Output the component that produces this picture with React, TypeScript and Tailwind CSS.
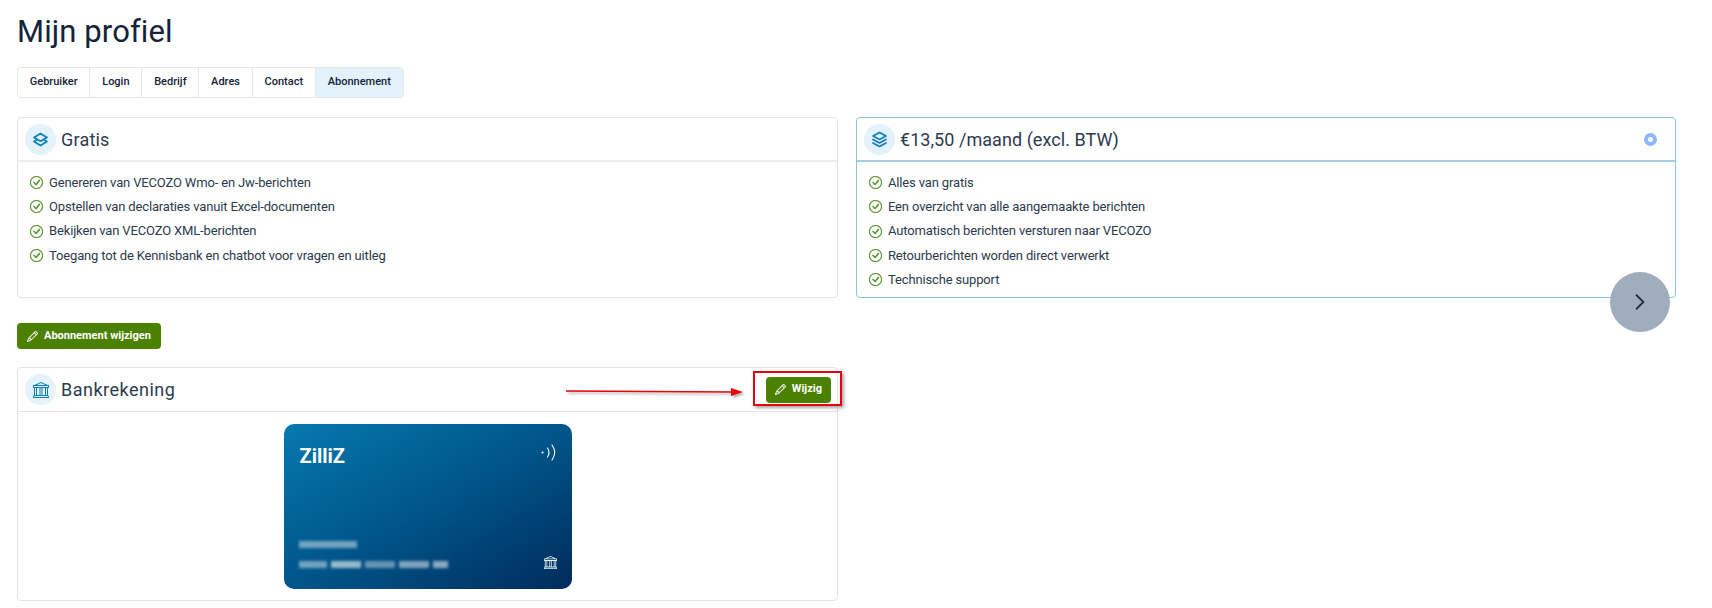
import type { ReactNode } from "react";
import { BsBank, BsCheckCircle, BsChevronRight, BsPencil } from "react-icons/bs";

const TABS = ["Gebruiker", "Login", "Bedrijf", "Adres", "Contact", "Abonnement"];

const FREE_FEATURES = [
  "Genereren van VECOZO Wmo- en Jw-berichten",
  "Opstellen van declaraties vanuit Excel-documenten",
  "Bekijken van VECOZO XML-berichten",
  "Toegang tot de Kennisbank en chatbot voor vragen en uitleg",
];

const PAID_FEATURES = [
  "Alles van gratis",
  "Een overzicht van alle aangemaakte berichten",
  "Automatisch berichten versturen naar VECOZO",
  "Retourberichten worden direct verwerkt",
  "Technische support",
];

// blurred account details on the card: [width, opacity]
const BLUR_ROW: [number, number][] = [
  [28, 0.45],
  [30, 0.6],
  [30, 0.4],
  [30, 0.5],
  [15, 0.55],
];

function IconBubble({ children }: { children: ReactNode }) {
  return (
    <span className="flex h-[31px] w-[31px] shrink-0 items-center justify-center rounded-full bg-[#e3f2fb] text-[#0f7fb5]">
      {children}
    </span>
  );
}

function StackIcon({ layers }: { layers: 2 | 3 }) {
  return (
    <svg width="17" height="17" viewBox="0 0 17 17" fill="none" stroke="currentColor" strokeWidth="1.7" strokeLinejoin="round" strokeLinecap="round">
      {layers === 2 ? (
        <>
          <path d="M8.5 2.5 15 6.5 8.5 10.2 2 6.5Z" />
          <path d="M4.6 9 2 10.5 8.5 14.5 15 10.5 12.4 9" />
        </>
      ) : (
        <>
          <path d="M8.5 1.5 15 5 8.5 8.5 2 5Z" />
          <path d="M2 8.5 8.5 12 15 8.5" />
          <path d="M2 12 8.5 15.5 15 12" />
        </>
      )}
    </svg>
  );
}

function FeatureList({ items }: { items: string[] }) {
  return (
    <ul className="flex flex-col gap-[5.3px] px-[12px] pt-[11px]">
      {items.map((item) => (
        <li key={item} className="flex h-[19px] items-center gap-[6px] text-[13px] tracking-[-0.15px] text-[#2c3b4e]">
          <BsCheckCircle size={13} strokeWidth={0.4} className="shrink-0 text-[#4c8a1c]" />
          {item}
        </li>
      ))}
    </ul>
  );
}

function GreenButton({ label, className }: { label: string; className: string }) {
  return (
    <button
      type="button"
      className={`flex h-[26px] items-center rounded-[4px] bg-[#4b8000] text-[11px] font-bold text-white ${className}`}
    >
      <BsPencil size={11} strokeWidth={0.4} />
      {label}
    </button>
  );
}

function BankCard() {
  return (
    <div className="flex h-[165px] w-[288px] flex-col justify-between rounded-[10px] bg-gradient-to-br from-[#0779ae] via-[#00558a] to-[#002c5c] py-[20px] pr-[15px] pl-[15px] text-white">
      <div className="flex items-start justify-between">
        <span className="pl-[1px] text-[20px] leading-[24px] font-bold">ZilliZ</span>
        <svg width="16" height="17" viewBox="0 0 16 17" fill="none" stroke="currentColor" strokeWidth="1.1" strokeLinecap="round">
          <circle cx="1.5" cy="8.5" r="1.1" fill="currentColor" stroke="none" />
          <path d="M6.5 4c2 3 2 6 0 9" />
          <path d="M11 1c3.6 5 3.6 10 0 15" />
        </svg>
      </div>
      <div className="flex items-end justify-between">
        <div className="flex flex-col gap-[13px] pb-[1px]">
          <div className="h-[7px] w-[58px] bg-white/45 blur-[1.5px]" />
          <div className="flex gap-[4px]">
            {BLUR_ROW.map(([width, opacity], i) => (
              <div key={i} className="h-[7px] bg-white blur-[1.5px]" style={{ width, opacity }} />
            ))}
          </div>
        </div>
        <BsBank size={13} className="text-[#e6eef4]" />
      </div>
    </div>
  );
}

export default function App() {
  return (
    <div className="relative h-[608px] w-[1712px] overflow-hidden bg-white pr-[36px] pl-[17px] font-['Roboto',sans-serif] text-[#14233a]">
      <h1 className="pt-[11px] text-[31px] leading-[42px] font-normal tracking-[0.1px] text-[#14233a]">Mijn profiel</h1>

      <nav className="mt-[14px] flex h-[31px] w-fit rounded-[4px] border border-[#e5e8eb] text-[11px] font-medium">
        {TABS.map((tab, i) => (
          <span
            key={tab}
            className={`flex items-center px-[11.8px] ${i > 0 ? "border-l border-[#e5e8eb]" : ""} ${
              tab === "Abonnement" ? "rounded-r-[4px] bg-[#e3f2fb]" : ""
            }`}
          >
            {tab}
          </span>
        ))}
      </nav>

      <div className="mt-[19px] grid grid-cols-[821px_820px] gap-[18px]">
        <section className="h-[181px] rounded-[4px] border border-[#e2e4e7]">
          <header className="flex h-[44px] items-center gap-[5px] border-b-2 border-[#eceef0] px-[7px]">
            <IconBubble>
              <StackIcon layers={2} />
            </IconBubble>
            <h2 className="text-[18px] tracking-[0.2px] text-[#2c3b4e]">Gratis</h2>
          </header>
          <FeatureList items={FREE_FEATURES} />
        </section>

        <section className="h-[181px] rounded-[4px] border border-[#8cc4dd]">
          <header className="flex h-[44px] items-center gap-[5px] border-b-2 border-[#a5cfe0] px-[7px]">
            <IconBubble>
              <StackIcon layers={3} />
            </IconBubble>
            <h2 className="flex-1 text-[18px] tracking-[0.05px] text-[#2c3b4e]">€13,50 /maand (excl. BTW)</h2>
            <span className="mr-[11px] h-[13px] w-[13px] rounded-full border-[4px] border-[#8ab8fb] bg-white" />
          </header>
          <FeatureList items={PAID_FEATURES} />
        </section>
      </div>

      <GreenButton label="Abonnement wijzigen" className="mt-[25px] gap-[6px] px-[10px]" />

      <section className="mt-[18px] h-[234px] w-[821px] rounded-[4px] border border-[#e2e4e7]">
        <header className="flex h-[44px] items-center gap-[5px] border-b border-[#e2e4e7] pr-[6px] pl-[7px]">
          <IconBubble>
            <BsBank size={16} />
          </IconBubble>
          <h2 className="flex-1 text-[18px] tracking-[0.5px] text-[#2c3b4e]">Bankrekening</h2>
          <GreenButton label="Wijzig" className="gap-[6px] px-[9px]" />
        </header>
        <div className="flex justify-center pt-[12px]">
          <BankCard />
        </div>
      </section>

      {/* scroll-to-next knop, hangt over de kaart heen */}
      <button
        type="button"
        className="absolute top-[272px] left-[1610px] flex h-[60px] w-[60px] items-center justify-center rounded-full bg-[#a0adbb] text-[#14233a]"
      >
        <BsChevronRight size={18} strokeWidth={0.8} />
      </button>

      {/* annotatie uit de screenshot: rode kader en pijl */}
      <div className="absolute top-[371px] left-[753px] h-[35px] w-[89px] border-2 border-[#e8000a] shadow-[2px_2px_3px_rgba(0,0,0,0.35)]" />
      <svg className="absolute top-[380px] left-[560px] drop-shadow-[2px_2px_1px_rgba(0,0,0,0.3)]" width="190" height="24" viewBox="0 0 190 24" fill="none">
        <path d="M6 11 L172 12" stroke="#ee0008" strokeWidth="1.5" />
        <path d="M171 8 L183 12 L171 16 Z" fill="#ee0008" />
      </svg>
    </div>
  );
}
